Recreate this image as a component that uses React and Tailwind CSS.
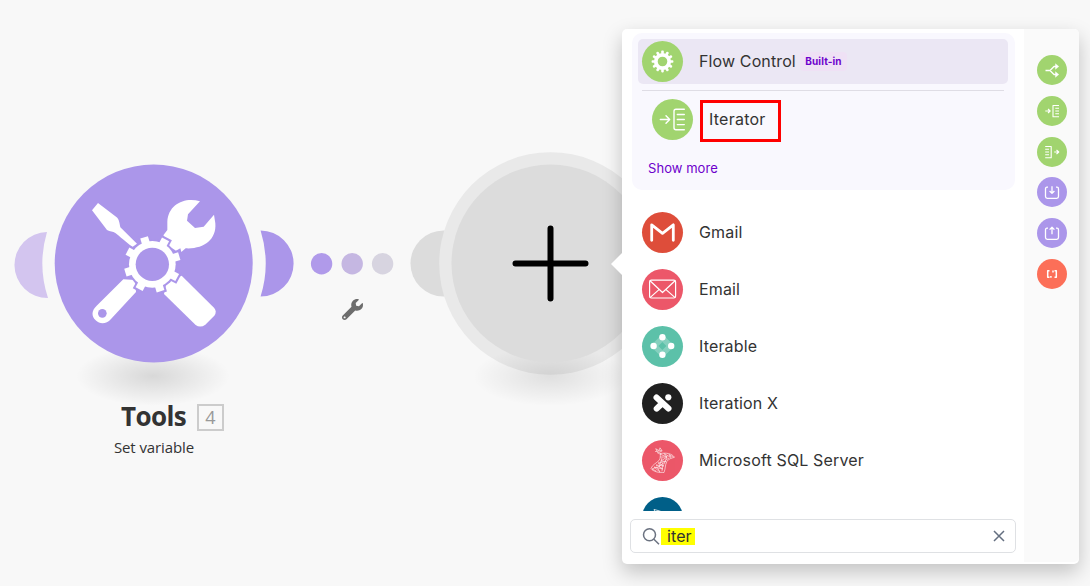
import React from "react";
import { FaWrench } from "react-icons/fa";

const GEAR_ANGLES = [28, 73, 118, 163, 208, 253, 298, 343];
const COG_ANGLES = [0, 30, 60, 90, 120, 150, 180, 210, 240, 270, 300, 330];

function ToolsGlyph() {
  return (
    <svg className="absolute left-[80px] top-[180px]" width="150" height="160" viewBox="0 0 450 480">
      <g fill="#fff">
        <path d="M36 91 L54 69 L109 111 C117 117 118 126 121 142 L171 191 L158 200 C150 197 130 178 106 159 C99 154 90 155 81 150 Z" />
        <path d="M360 64 C315 50 265 72 262 125 L262 150 L250 166 L270 200 L288 212 L301 205 L304 216 L317 205 C370 208 410 180 406 130 L402 104 L371 140 L345 144 L321 122 L324 103 Z" />
        <path d="M130 298 L165 300 L168 336 L93 417 C79 433 60 434 47 421 C34 408 34 392 50 377 Z" />
        <path d="M305 287 L402 383 Q412 394 403 407 L376 434 Q361 445 347 435 L252 342 L260 305 Z" />
      </g>
      <circle cx="67" cy="400" r="13" fill="#ab96ea" />
      <g transform="translate(217 253)">
        <g fill="#ab96ea">
          <circle r="76" />
          {GEAR_ANGLES.map((a) => (
            <rect key={a} x="60" y="-18" width="31" height="36" transform={`rotate(${a})`} />
          ))}
        </g>
        <g fill="#fff">
          <circle r="70" />
          {GEAR_ANGLES.map((a) => (
            <rect key={a} x="60" y="-12" width="24.500" height="24" transform={`rotate(${a})`} />
          ))}
        </g>
        <circle r="50" fill="#ab96ea" />
      </g>
    </svg>
  );
}

function Canvas() {
  return (
    <>
      <svg className="absolute left-0 top-0" width="1090" height="586">
        <defs>
          <radialGradient id="floor">
            <stop offset="0" stopColor="#000" stopOpacity="0.13" />
            <stop offset="0.5" stopColor="#000" stopOpacity="0.065" />
            <stop offset="1" stopColor="#000" stopOpacity="0" />
          </radialGradient>
          <radialGradient id="floorLight">
            <stop offset="0" stopColor="#000" stopOpacity="0.1" />
            <stop offset="0.5" stopColor="#000" stopOpacity="0.05" />
            <stop offset="1" stopColor="#000" stopOpacity="0" />
          </radialGradient>
        </defs>
        <path d="M47 232 A33 33 0 1 0 48 298 A110.500 110.500 0 0 1 47 232 Z" fill="#d3c5ef" />
        <path d="M260 230.500 A33 33 0 0 1 260 296.500 A111 111 0 0 0 260 230.500 Z" fill="#ab96ea" transform="translate(.6 0)" />
        <ellipse cx="153" cy="376" rx="77" ry="30" fill="url(#floor)" />
        <circle cx="153.700" cy="263.500" r="99" fill="#ab96ea" />
        <circle cx="321.600" cy="263.700" r="10.700" fill="#b09aea" />
        <circle cx="352.200" cy="263.700" r="10.700" fill="#c5b7e2" />
        <circle cx="382.600" cy="263.700" r="10.700" fill="#d7d4e0" />
        <circle cx="443.500" cy="263.500" r="33" fill="#dcdcdc" />
        <circle cx="550.500" cy="263.500" r="111.300" fill="#e9e9e9" />
        <ellipse cx="550" cy="376" rx="77" ry="30" fill="url(#floorLight)" />
        <circle cx="550.500" cy="263.500" r="99" fill="#dcdcdc" />
        <path d="M515.500 263.500 H585.500 M550.500 228.500 V298.500" stroke="#000" strokeWidth="6" strokeLinecap="round" />
      </svg>
      <ToolsGlyph />
      <FaWrench className="absolute left-[342px] top-[299px] text-[#6d6d6d]" size={21} />
      <div className="absolute left-[74px] top-[396px] flex w-[160px] flex-col items-center font-['Open_Sans','Noto_Sans',sans-serif] text-[#333]">
        <div className="flex h-[40px] w-full items-center pl-[47px]">
          <span className="w-[76px] text-[26px] font-bold tracking-[-0.6px]">Tools</span>
          <span className="mt-[2px] flex h-[27px] w-[27px] items-center justify-center border-2 border-[#ccc] text-[18px] leading-[20px] text-[#999]">4</span>
        </div>
        <span className="text-[15px] leading-[22px] tracking-[-0.1px]">Set variable</span>
      </div>
    </>
  );
}

function Disc({ className, children }) {
  return (
    <span className={`h-[41px] w-[41px] shrink-0 overflow-hidden rounded-full ${className}`}>
      <svg width="41" height="41" viewBox="0 0 41 41" fill="none" stroke="#fff" strokeLinecap="round" strokeLinejoin="round">
        {children}
      </svg>
    </span>
  );
}

const APPS = [
  {
    name: "Gmail",
    color: "bg-[#de4d3a]",
    icon: <path d="M9.700 28.300 V12.800 L20.500 21.400 L31.300 12.800 V28.300" strokeWidth="2.800" />,
  },
  {
    name: "Email",
    color: "bg-[#ec5769]",
    icon: (
      <g strokeWidth="1.200">
        <rect x="7.600" y="11.200" width="26" height="17.800" rx="1.800" />
        <path d="M8.300 12 L20.500 23.500 L32.800 12 M8.300 28.400 L17 20.600 M32.800 28.400 L24 20.600" />
      </g>
    ),
  },
  {
    name: "Iterable",
    color: "bg-[#5cc1a9]",
    icon: (
      <g stroke="none" fill="#fff">
        <g opacity="0.25">
          <path d="M20.400 8 L32.400 20 L20.400 32 L8.400 20 Z M20.400 16 L16.400 20 L20.400 24 L24.400 20 Z" fillRule="evenodd" />
        </g>
        <circle cx="20.400" cy="11.200" r="3.200" />
        <circle cx="11.600" cy="20" r="3.200" />
        <circle cx="29.200" cy="20" r="3.200" />
        <circle cx="20.400" cy="28.700" r="3.200" />
      </g>
    ),
  },
  {
    name: "Iteration X",
    color: "bg-[#202020]",
    icon: (
      <>
        <path d="M14.500 14.500 L26.500 25.500 M14.700 25.600 L19 21.500" strokeWidth="6" />
        <circle cx="26.300" cy="14.300" r="3.100" fill="#fff" stroke="none" />
      </>
    ),
  },
  {
    name: "Microsoft SQL Server",
    color: "bg-[#ec5769]",
    icon: (
      <g strokeWidth="0.700" opacity="0.850">
        <path d="M14 9 L17 10.500 L18 7.800 L19.500 10 M13.500 11.500 L19.500 10.500 M16 13 L20 11 M14 9 L15.500 12.500 L18.500 14.500" />
        <path d="M18.500 13.500 C24 12.500 30 13.500 32.500 17.300 C29.500 18.200 26.500 18.800 24.800 21.500 C23 25 23.500 29 22 32.500 C17 33 11 31.500 9 28.500 C10 25 14.500 23 17 20.500 C18.800 18.500 18 16 18.500 13.500 Z" />
        <path d="M19 14.500 L25 17 L22 13.500 L29 17.500 L27 14.500 L31 17 M18.500 17 L25 17 L19 21 L24 21.500 L16 23 L22 26 L14 25 L21 29 L12 27 L18 32 L15 27 L10 29 L14 31 M20 18 L17 27 L21 23 L20 31 M25 17 L22 24 M27 18 L24 20" strokeDasharray="2.200 .7" />
      </g>
    ),
  },
];

const SHORTCUTS = [
  {
    id: "router",
    color: "bg-[#a1d46f]",
    icon: (
      <>
        <path d="M8.500 15.500 H13 L17 11.500 H20 M13 15.500 L17 19.500 H20" strokeWidth="1.300" />
        <path d="M18.500 8.700 L21.800 11.500 L18.500 14.300 Z M18.500 16.700 L21.800 19.500 L18.500 22.300 Z" fill="#fff" strokeWidth=".4" />
      </>
    ),
  },
  {
    id: "iterator",
    color: "bg-[#a1d46f]",
    icon: <path d="M8.300 15 H13 M11 13 L13.200 15 L11 17 M22 9.500 H16 V20.800 H22 M18.300 12.300 H22 M18.300 15 H22 M18.300 17.800 H22" strokeWidth="1.100" />,
  },
  {
    id: "aggregator",
    color: "bg-[#a1d46f]",
    icon: <path d="M17.200 15 H21.700 M19.500 13 L21.800 15 L19.500 17 M8.200 9.500 H14.200 V20.800 H8.200 M8.200 12.300 H12 M8.200 15 H12 M8.200 17.800 H12" strokeWidth="1.100" />,
  },
  {
    id: "set",
    color: "bg-[#ab96ea]",
    icon: <path d="M11 10.200 H10 Q8.500 10.200 8.500 12 V19.500 Q8.500 21.300 10.300 21.300 H19.700 Q21.500 21.300 21.500 19.500 V12 Q21.500 10.200 20 10.200 H19 M15 9.200 V16.300 M12.600 14 L15 16.400 L17.400 14" strokeWidth="1.300" />,
  },
  {
    id: "get",
    color: "bg-[#ab96ea]",
    icon: <path d="M11 10.200 H10 Q8.500 10.200 8.500 12 V19.500 Q8.500 21.300 10.300 21.300 H19.700 Q21.500 21.300 21.500 19.500 V12 Q21.500 10.200 20 10.200 H19 M15 16.300 V9.300 M12.600 11.600 L15 9.200 L17.400 11.600" strokeWidth="1.300" />,
  },
  {
    id: "parser",
    color: "bg-[#fc6f58]",
    icon: (
      <>
        <path d="M12.500 11.700 H10.700 V18.300 H12.500 M17.500 11.700 H19.300 V18.300 H17.500" strokeWidth="1.500" />
        <path d="M13.900 17 V18.800 M16 11.600 V13.600" strokeWidth="1.500" />
      </>
    ),
  },
];

function FlowControlGroup() {
  return (
    <div className="ml-[10px] mt-[4px] h-[157px] w-[383px] shrink-0 rounded-[10px] bg-[#f9f8fe] px-[6px] pt-[6px]">
      <div className="flex h-[45px] w-[370px] items-center rounded-[5px] bg-[#ebe7f4] pl-[4px]">
        <Disc className="bg-[#a1d46f]">
          <g stroke="none" fill="#fff">
            <path fillRule="evenodd" d="M20.500 11.900 a8.600 8.600 0 1 0 0 17.200 a8.600 8.600 0 1 0 0 -17.200 Z M20.500 15.700 a4.800 4.800 0 1 1 0 9.600 a4.800 4.800 0 1 1 0 -9.600 Z" />
            {COG_ANGLES.map((a) => (
              <rect key={a} x="28" y="19.200" width="3.400" height="2.600" rx=".8" transform={`rotate(${a} 20.500 20.500)`} />
            ))}
          </g>
        </Disc>
        <span className="mb-px ml-[16px] w-[101px] whitespace-nowrap text-[16px] tracking-[0.12px] text-[#333]">Flow Control</span>
        <span className="flex h-[19px] w-[47px] items-center justify-center rounded-[4px] bg-[#efe1f5] text-[10px] font-bold tracking-[0.1px] text-[#6d00cc]">Built-in</span>
      </div>
      <div className="ml-[4px] mt-[6px] h-px w-[362px] bg-[#dfdde5]" />
      <div className="ml-[14px] mt-[8px] flex h-[41px] items-center">
        <Disc className="bg-[#a1d46f]">
          <path d="M8.300 20.500 H17.500 M14 16.700 L17.700 20.500 L14 24.300" strokeWidth="1.400" />
          <path d="M32.300 10.300 H24 Q22 10.300 22 12.300 V28.700 Q22 30.700 24 30.700 H32.300 M25.300 15.500 H32.300 M25.300 20.500 H32.300 M25.300 25.600 H32.300" strokeWidth="1.400" />
        </Disc>
        <span className="ml-[7px] mt-[3px] h-[42px] w-[81px] border-[3px] border-[#f00] pl-[6px] text-[16px] leading-[33px] tracking-[0.25px] text-[#333]">Iterator</span>
      </div>
      <div className="ml-[10px] mt-[18px] text-[13px] leading-[20px] tracking-[0.05px] text-[#6d00cc]">Show more</div>
    </div>
  );
}

function SearchPanel() {
  return (
    <div className="absolute left-[622px] top-[29px] flex h-[535px] w-[457px] rounded-[5px] bg-white font-['Inter',sans-serif] shadow-[0_8px_20px_rgba(0,0,0,0.22)]">
      <svg className="absolute -left-[11px] top-[223px]" width="12" height="24">
        <path d="M12 0 V24 L0 12 Z" fill="#fff" />
      </svg>
      <div className="flex w-[402px] flex-col">
        <div className="flex h-[482px] flex-col overflow-hidden">
          <FlowControlGroup />
          <ul className="ml-[20px] mt-[22px] flex flex-col gap-[16px]">
            {APPS.map((app) => (
              <li key={app.name} className="flex h-[41px] items-center">
                <Disc className={app.color}>{app.icon}</Disc>
                <span className="mb-px ml-[16px] text-[16px] tracking-[0.15px] text-[#333]">{app.name}</span>
              </li>
            ))}
            <li className="flex h-[41px]">
              <Disc className="bg-[#005f88]">
                <path d="M13 15 L12 12.500 L16 13.500 L19 14.500" strokeWidth=".8" />
              </Disc>
            </li>
          </ul>
        </div>
        <div className="ml-[8px] mt-[8px] flex h-[34px] w-[386px] items-center rounded-[5px] border border-[#dfe1e4] bg-white">
          <svg className="ml-[11px] shrink-0" width="19" height="19" viewBox="0 0 19 19" fill="none" stroke="#6b7280" strokeWidth="1.500">
            <circle cx="7.500" cy="7.800" r="6" />
            <path d="M11.900 12.200 L17 17.200" />
          </svg>
          <span className="mt-px h-[17px] w-[34px] bg-[#ff0] pl-[6px] text-[16px] leading-[17px] tracking-[0.1px] text-[#333]">iter</span>
          <svg className="ml-auto mr-[10px]" width="12" height="12" viewBox="0 0 12 12" fill="none" stroke="#646f80" strokeWidth="1.500">
            <path d="M1 1 L11 11 M11 1 L1 11" />
          </svg>
        </div>
      </div>
      <div className="flex h-[533px] w-[55px] flex-col items-center gap-[10.800px] rounded-r-[5px] bg-[#fafafa] pl-px pt-[26px]">
        {SHORTCUTS.map((s) => (
          <span key={s.id} className={`h-[30px] w-[30px] shrink-0 rounded-full ${s.color}`}>
            <svg width="30" height="30" viewBox="0 0 30 30" fill="none" stroke="#fff" strokeLinejoin="round">
              {s.icon}
            </svg>
          </span>
        ))}
      </div>
    </div>
  );
}

export default function App() {
  return (
    <main className="relative h-[586px] w-[1090px] overflow-hidden bg-[#f8f8f8]">
      <Canvas />
      <SearchPanel />
    </main>
  );
}
